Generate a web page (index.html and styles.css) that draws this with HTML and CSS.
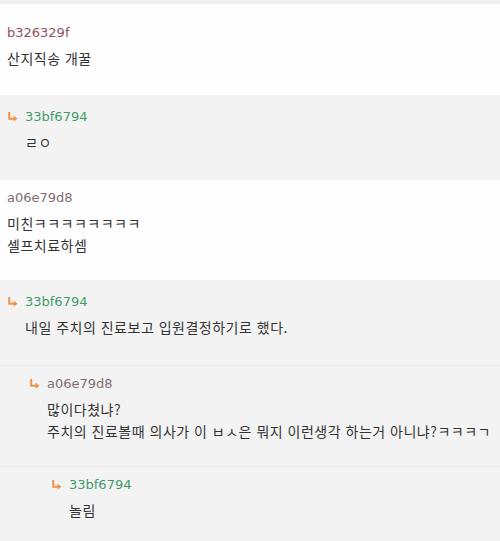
FILE: index.html
```
<!DOCTYPE html>
<html lang="ko">
<head>
    <meta charset="UTF-8">
    <title>comments</title>
    <link rel="stylesheet" href="styles.css">
</head>
<body>
    <div class="cmt">
        <div class="item top">
            <div class="name n-red">b326329f</div>
            <div class="txt">산지직송 개꿀</div>
        </div>
        <div class="item re lv1">
            <div class="name n-green"><svg class="arr" viewBox="0 0 10 10"><path d="M2 1V7H7"/><path d="M6 4.2L9.5 7L6 9.8Z" class="head"/></svg>33bf6794</div>
            <div class="txt">ㄹㅇ</div>
        </div>
        <div class="item">
            <div class="name n-gray">a06e79d8</div>
            <div class="txt">미친ㅋㅋㅋㅋㅋㅋㅋㅋ<br>셀프치료하셈</div>
        </div>
        <div class="item re lv1">
            <div class="name n-green"><svg class="arr" viewBox="0 0 10 10"><path d="M2 1V7H7"/><path d="M6 4.2L9.5 7L6 9.8Z" class="head"/></svg>33bf6794</div>
            <div class="txt">내일 주치의 진료보고 입원결정하기로 했다.</div>
        </div>
        <div class="item re2 lv2">
            <div class="name n-gray"><svg class="arr" viewBox="0 0 10 10"><path d="M2 1V7H7"/><path d="M6 4.2L9.5 7L6 9.8Z" class="head"/></svg>a06e79d8</div>
            <div class="txt">많이다쳤냐?<br>주치의 진료볼때 의사가 이 ㅂㅅ은 뭐지 이런생각 하는거 아니냐?ㅋㅋㅋㄱ</div>
        </div>
        <div class="item re2 lv3">
            <div class="name n-green"><svg class="arr" viewBox="0 0 10 10"><path d="M2 1V7H7"/><path d="M6 4.2L9.5 7L6 9.8Z" class="head"/></svg>33bf6794</div>
            <div class="txt">놀림</div>
        </div>
    </div>
</body>
</html>
```

FILE: styles.css
```
* {padding: 0; margin: 0; box-sizing: border-box;}
body {background: #fff; font-family: "Noto Sans CJK KR", "Noto Sans", sans-serif; color: #333;}
.cmt {border-top: 4px solid #efefef;}
.cmt .item {padding: 8px 7px 24px; background: #fefefe;}
.cmt .item.top {padding-top: 19px; padding-bottom: 26px;}
.cmt .item.re {background: #f3f3f3; padding-top: 12px; padding-bottom: 27px;}
.cmt .item.re2 {background: #f3f3f3; border-top: 1px solid #ebebeb; padding-bottom: 24px;}
.cmt .item.lv1 {padding-left: 7px;}
.cmt .item.lv2 {padding-left: 29px;}
.cmt .item.lv3 {padding-left: 51px;}
.cmt .name {display: flex; align-items: center; height: 18px; font-family: "DejaVu Sans", Verdana, sans-serif; font-size: 13px; margin-bottom: 6px;}
.cmt .re .txt, .cmt .re2 .txt {padding-left: 18px;}
.cmt .name .arr {width: 11px; height: 11px; margin-right: 7px;}
.cmt .name .arr path {fill: none; stroke: #f2924a; stroke-width: 1.8;}
.cmt .name .arr path.head {fill: #f2924a; stroke: none;}
.cmt .n-red {color: #8c5260;}
.cmt .n-green {color: #3f9c68;}
.cmt .n-gray {color: #806f72;}
.cmt .txt {font-size: 14px; line-height: 22px; letter-spacing: 0.5px; color: #333;}
```
